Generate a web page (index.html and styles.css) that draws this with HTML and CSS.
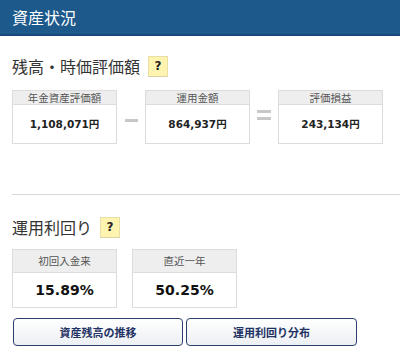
FILE: index.html
```html
<!DOCTYPE html>
<html lang="ja">
<head>
<meta charset="utf-8">
<link rel="stylesheet" href="styles.css">
</head>
<body>
<header class="bar">資産状況</header>
<main class="content">
  <section class="sec-valuation">
    <h2 class="title">残高・時価評価額 <span class="help">?</span></h2>
    <div class="compare">
      <div class="box">
        <div class="box-head">年金資産評価額</div>
        <div class="box-val">1,108,071円</div>
      </div>
      <div class="op"><span class="minus"></span></div>
      <div class="box">
        <div class="box-head">運用金額</div>
        <div class="box-val">864,937円</div>
      </div>
      <div class="op"><span class="eq"></span><span class="eq"></span></div>
      <div class="box">
        <div class="box-head">評価損益</div>
        <div class="box-val">243,134円</div>
      </div>
    </div>
  </section>
  <hr class="rule">
  <section class="sec-yield">
    <h2 class="title">運用利回り <span class="help">?</span></h2>
    <div class="yields">
      <div class="ybox">
        <div class="ybox-head">初回入金来</div>
        <div class="ybox-val">15.89%</div>
      </div>
      <div class="ybox">
        <div class="ybox-head">直近一年</div>
        <div class="ybox-val">50.25%</div>
      </div>
    </div>
    <div class="buttons">
      <button class="btn btn-a">資産残高の推移</button>
      <button class="btn btn-b">運用利回り分布</button>
    </div>
  </section>
</main>
</body>
</html>
```
FILE: styles.css
```css
* { box-sizing: border-box; }
body {
  margin: 0;
  background: #fff;
  font-family: "Noto Sans CJK JP", "DejaVu Sans", sans-serif;
  color: #333;
}
.bar {
  height: 36px;
  background: #1d5a8b;
  border-bottom: 2px solid #15497a;
  color: #fff;
  font-size: 16px;
  line-height: 34px;
  padding-left: 12px;
}
.content { padding: 0 0 0 12px; }
.title {
  margin: 0;
  font-size: 16px;
  font-weight: normal;
  color: #333;
  display: flex;
  align-items: center;
  height: 22px;
}
.sec-valuation .title { margin-top: 19px; }
.help {
  display: inline-block;
  width: 20px;
  height: 21px;
  margin-left: 8px;
  background: #fff3b0;
  border: 1px solid #e8dfa8;
  border-bottom-color: #d9d2a6;
  font-family: "DejaVu Sans", sans-serif;
  font-size: 12px;
  font-weight: bold;
  line-height: 19px;
  text-align: center;
  color: #222;
}
.compare {
  display: flex;
  margin-top: 13px;
}
.box {
  width: 105px;
  border: 1px solid #dcdcdc;
}
.box-head {
  background: #eeeeee;
  border-bottom: 1px solid #dcdcdc;
  height: 14px;
  font-size: 10.5px;
  line-height: 13px;
  text-align: center;
  color: #555;
}
.box-val {
  height: 38px;
  line-height: 38px;
  text-align: center;
  font-family: "DejaVu Sans", "Noto Sans CJK JP", sans-serif;
  font-size: 10.5px;
  font-weight: bold;
  color: #222;
}
.op {
  width: 28px;
  display: flex;
  flex-direction: column;
  align-items: center;
  justify-content: center;
  gap: 4px;
  padding-bottom: 4px;
}
.minus, .eq {
  display: block;
  width: 13px;
  height: 3px;
  background: #c8c8c8;
}
.minus { margin-top: 10px; }
.eq { width: 14px; }
.rule {
  border: 0;
  border-top: 1px solid #d8d8d8;
  margin: 50px 0 0 0;
}
.sec-yield .title { margin-top: 21px; }
.yields {
  display: flex;
  gap: 15px;
  margin-top: 11px;
}
.ybox {
  width: 105px;
  border: 1px solid #dcdcdc;
}
.ybox-head {
  background: #eeeeee;
  border-bottom: 1px solid #dcdcdc;
  height: 23px;
  font-size: 10.5px;
  line-height: 22px;
  text-align: center;
  color: #555;
}
.ybox-val {
  height: 34px;
  line-height: 34px;
  text-align: center;
  font-family: "DejaVu Sans", sans-serif;
  font-size: 14px;
  font-weight: bold;
  color: #111;
}
.buttons {
  display: flex;
  gap: 3px;
  margin-top: 10px;
  padding-left: 1px;
}
.btn {
  height: 28px;
  border: 1px solid #2c3f6c;
  border-radius: 4px;
  background: linear-gradient(#ffffff, #eceff3);
  font-family: "Noto Sans CJK JP", sans-serif;
  font-size: 11px;
  font-weight: bold;
  color: #1f3264;
  padding: 0;
}
.btn-a { width: 170px; }
.btn-b { width: 171px; }
```
